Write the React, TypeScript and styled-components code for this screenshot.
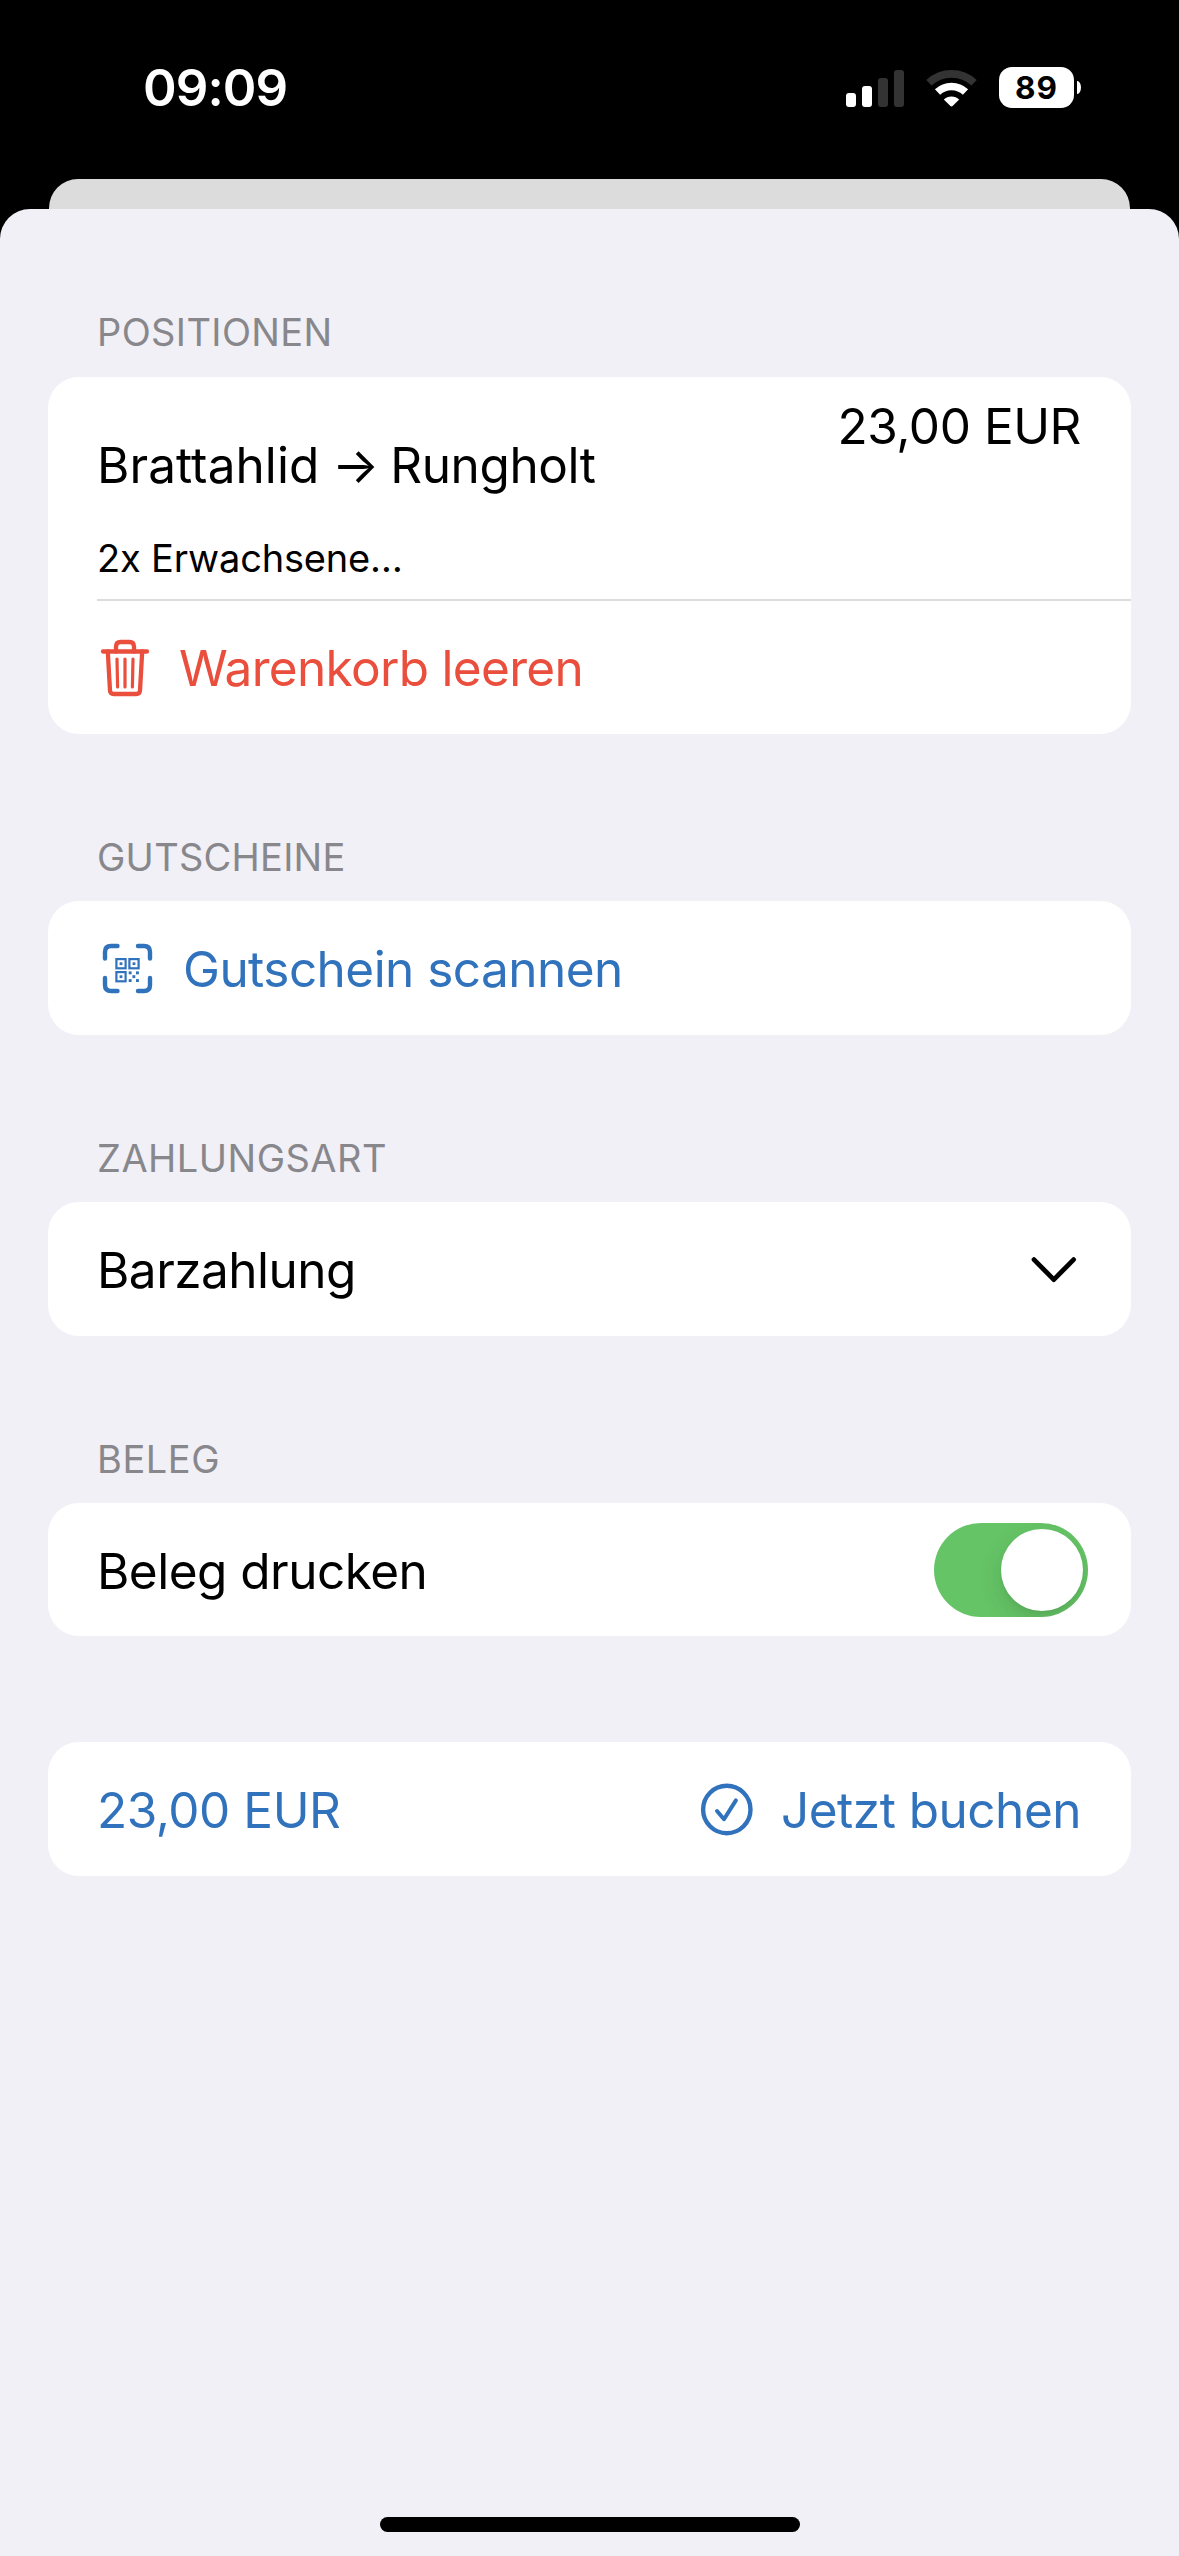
import React, { useState } from "react";
import styled, { createGlobalStyle } from "styled-components";

const BLUE = "#3172bd";
const RED = "#ea4e3d";

const GlobalStyle = createGlobalStyle`
  *, *::before, *::after { box-sizing: border-box; }
  body { margin: 0; background: #000; }
  button { font: inherit; color: inherit; border: 0; background: none; padding: 0; text-align: left; }
`;

const Screen = styled.div`
  display: flex;
  flex-direction: column;
  width: 1179px;
  height: 2556px;
  overflow: hidden;
  background: #000;
  color: #000;
  font-family: Inter, "Liberation Sans", sans-serif;
  font-size: 49.5px;
  line-height: 60px;
`;

const StatusBar = styled.header`
  display: flex;
  justify-content: space-between;
  align-items: flex-start;
  height: 179px;
  padding: 58px 98px 0 143px;
  color: #fff;
`;

const Clock = styled.time`
  font-size: 51px;
  font-weight: 570;
  letter-spacing: -0.9px;
`;

const StatusIcons = styled.div`
  display: flex;
  align-items: center;
  height: 60px;
`;

const SignalBars = styled.div`
  display: flex;
  align-items: flex-end;
  gap: 6px;
  height: 37px;
  margin-right: 22px;
`;

const SignalBar = styled.span<{ $height: number; $active?: boolean }>`
  width: 10px;
  height: ${(p) => p.$height}px;
  border-radius: 3px;
  background: ${(p) => (p.$active ? "#fff" : "#333")};
`;

const WifiIcon = styled.svg`
  width: 51px;
  height: 37px;
  margin-right: 22px;
`;

const Battery = styled.div`
  display: flex;
  align-items: center;
  gap: 3px;
  margin-bottom: 1px;
`;

const BatteryBody = styled.span`
  width: 75px;
  height: 41px;
  border-radius: 13px;
  background: #fff;
  color: #000;
  font-size: 31.5px;
  font-weight: 700;
  line-height: 41px;
  letter-spacing: 1px;
  text-align: center;
`;

const BatteryNub = styled.span`
  width: 4px;
  height: 13px;
  border-radius: 0 4px 4px 0 / 0 7px 7px 0;
  background: #fff;
`;

const BackCard = styled.div`
  flex: none;
  height: 30px;
  margin: 0 49px;
  border-radius: 29px 29px 0 0;
  background: #dcdcdc;
`;

const Sheet = styled.main`
  display: flex;
  flex: 1;
  flex-direction: column;
  padding: 0 48px 24px;
  border-radius: 30px 30px 0 0;
  background: #f1f0f6;
`;

const SectionTitle = styled.h2<{ $spacing: number; $first?: boolean }>`
  display: flex;
  align-items: flex-end;
  height: ${(p) => (p.$first ? 168 : 167)}px;
  margin: 0;
  padding: 0 49px ${(p) => (p.$first ? 22 : 21)}px;
  color: #88878c;
  font-size: 38px;
  font-weight: 400;
  line-height: 46px;
  letter-spacing: ${(p) => p.$spacing}px;
`;

const Card = styled.div<{ $height: number; $gap?: number }>`
  display: flex;
  flex-direction: column;
  height: ${(p) => p.$height}px;
  margin-top: ${(p) => p.$gap ?? 0}px;
  border-radius: 31px;
  background: #fff;
`;

const Row = styled.div<{ $color?: string }>`
  display: flex;
  flex: 1;
  justify-content: space-between;
  align-items: center;
  padding: 0 50px 0 49px;
  color: ${(p) => p.$color ?? "#000"};
`;

const PositionRow = styled.div`
  display: flex;
  justify-content: space-between;
  height: 222px;
  padding: 19px 50px 0 49px;
`;

const PositionText = styled.div`
  display: flex;
  flex-direction: column;
  gap: 40px;
  padding-top: 39px;
`;

const Route = styled.div`
  white-space: pre;
`;

const Detail = styled.div`
  font-size: 38px;
  line-height: 46px;
  letter-spacing: -0.19px;
`;

const Separator = styled.hr`
  flex: none;
  width: calc(100% - 49px);
  height: 2px;
  margin: 0 0 0 49px;
  border: 0;
  background: #dcdcde;
`;

const Label = styled.span<{ $spacing?: number }>`
  letter-spacing: ${(p) => p.$spacing ?? -0.5}px;
`;

const RowLabel = styled(Label)<{ $drop?: number }>`
  padding-top: ${(p) => p.$drop ?? 2}px;
`;

const Action = styled.button<{ $gap: number }>`
  display: flex;
  align-items: center;
  gap: ${(p) => p.$gap}px;
`;

const Icon = styled.svg<{ $width: number }>`
  flex: none;
  width: ${(p) => p.$width}px;
  height: 60px;
  fill: none;
  stroke: currentColor;
  stroke-linecap: round;
  stroke-linejoin: round;
`;

const Track = styled.button<{ $on: boolean }>`
  display: flex;
  justify-content: ${(p) => (p.$on ? "flex-end" : "flex-start")};
  align-items: center;
  width: 154px;
  height: 94px;
  margin: 1px -7px 0 0;
  padding: 0 5.5px;
  overflow: hidden;
  border-radius: 47px;
  background: ${(p) => (p.$on ? "#65c466" : "#e9e9ea")};
`;

const Knob = styled.span`
  width: 82px;
  height: 82px;
  border-radius: 50%;
  background: #fff;
  box-shadow: 0 9px 24px rgba(0, 0, 0, 0.13), 0 3px 3px rgba(0, 0, 0, 0.03);
`;

const HomeIndicator = styled.div`
  width: 420px;
  height: 15px;
  margin: auto auto 0;
  border-radius: 8px;
  background: #000;
`;

function Wifi() {
  return (
    <WifiIcon viewBox="0 0 51 37" fill="none">
      <path d="M2.9 13.4 A33 33 0 0 1 48.1 13.4" stroke="#333" strokeWidth="7.6" transform="translate(0 -.6)" />
      <path d="M11.5 22.4 A20.4 20.4 0 0 1 39.5 22.4" stroke="#fff" strokeWidth="7.6" transform="translate(0 -.4)" />
      <path d="M17.8 30 A11 11 0 0 1 33.2 30 L26.6 36.5 Q25.5 37.4 24.4 36.5Z" fill="#fff" transform="translate(0 -.4)" />
    </WifiIcon>
  );
}

function TrashIcon() {
  return (
    <Icon $width={56} viewBox="0 0 56 60" strokeWidth="4.3">
      <path d="M6 13.5H50" />
      <path d="M19 13.5V8.5Q19 4 23.5 4H32.5Q37 4 37 8.5V13.5" />
      <path d="M10.8 13.5L13 52.5Q13.2 56 16.8 56H39.2Q42.8 56 43 52.5L45.2 13.5" />
      <path d="M20 21L20.6 49M28 21V49M36 21L35.4 49" strokeWidth="3.2" />
    </Icon>
  );
}

function QrScanIcon() {
  return (
    <Icon $width={59} viewBox="0 0 59 60">
      <path
        d="M8 20.5V14Q8 8 14 8H20.5M41 8H47Q53 8 53 14V20.5M53 40V47Q53 53 47 53H41M20.5 53H14Q8 53 8 47V40"
        strokeWidth="4.4"
      />
      <g strokeWidth="2.2" strokeLinejoin="miter">
        <rect x="19.4" y="21.1" width="9.2" height="9.2" />
        <rect x="32.4" y="21.1" width="9.2" height="9.2" />
        <rect x="19.4" y="34.1" width="9.2" height="9.2" />
      </g>
      <g fill="currentColor" stroke="none">
        <rect x="22.6" y="24.3" width="2.8" height="2.8" />
        <rect x="35.6" y="24.3" width="2.8" height="2.8" />
        <rect x="22.6" y="37.3" width="2.8" height="2.8" />
        <rect x="31.7" y="33.4" width="2.9" height="2.9" />
        <rect x="39" y="33.4" width="2.9" height="2.9" />
        <rect x="35.4" y="37.2" width="2.9" height="2.9" />
        <rect x="31.7" y="41.1" width="2.9" height="2.9" />
        <rect x="39" y="41.1" width="2.9" height="2.9" />
      </g>
    </Icon>
  );
}

function ChevronIcon() {
  return (
    <Icon $width={56} viewBox="0 0 56 60" strokeWidth="4.8">
      <path d="M9 20.6L28.8 40.6L48.6 20.6" />
    </Icon>
  );
}

function CheckCircleIcon() {
  return (
    <Icon $width={57} viewBox="0 0 57 60" strokeWidth="4.4">
      <circle cx="28.8" cy="30.5" r="23.7" />
      <path d="M19 32L26 40.2L37.9 21.4" strokeWidth="4" />
    </Icon>
  );
}

export default function App() {
  const [printReceipt, setPrintReceipt] = useState(true);

  return (
    <Screen lang="de">
      <GlobalStyle />
      <StatusBar>
        <Clock>09:09</Clock>
        <StatusIcons>
          <SignalBars>
            <SignalBar $height={14} $active />
            <SignalBar $height={21} $active />
            <SignalBar $height={29} />
            <SignalBar $height={37} />
          </SignalBars>
          <Wifi />
          <Battery>
            <BatteryBody>89</BatteryBody>
            <BatteryNub />
          </Battery>
        </StatusIcons>
      </StatusBar>
      <BackCard />
      <Sheet>
        <SectionTitle $first $spacing={0.38}>POSITIONEN</SectionTitle>
        <Card $height={357}>
          <PositionRow>
            <PositionText>
              <Route>
                <Label $spacing={0.08}>Brattahlid</Label>
                <Label $spacing={-1.4}>{" → "}</Label>
                <Label $spacing={-0.4}>Rungholt</Label>
              </Route>
              <Detail>2x Erwachsene…</Detail>
            </PositionText>
            <Label $spacing={-0.45}>23,00 EUR</Label>
          </PositionRow>
          <Separator />
          <Row $color={RED}>
            <Action $gap={26}>
              <TrashIcon />
              <RowLabel $drop={0} $spacing={-0.68}>Warenkorb leeren</RowLabel>
            </Action>
          </Row>
        </Card>

        <SectionTitle $spacing={0.25}>GUTSCHEINE</SectionTitle>
        <Card $height={134}>
          <Row $color={BLUE}>
            <Action $gap={27}>
              <QrScanIcon />
              <RowLabel $spacing={-0.54}>Gutschein scannen</RowLabel>
            </Action>
          </Row>
        </Card>

        <SectionTitle $spacing={0.48}>ZAHLUNGSART</SectionTitle>
        <Card $height={134}>
          <Row>
            <RowLabel $spacing={-0.52}>Barzahlung</RowLabel>
            <ChevronIcon />
          </Row>
        </Card>

        <SectionTitle $spacing={0.55}>BELEG</SectionTitle>
        <Card $height={133}>
          <Row>
            <RowLabel $spacing={-0.52}>Beleg drucken</RowLabel>
            <Track
              $on={printReceipt}
              role="switch"
              aria-checked={printReceipt}
              onClick={() => setPrintReceipt(!printReceipt)}
            >
              <Knob />
            </Track>
          </Row>
        </Card>

        <Card $height={134} $gap={106}>
          <Row $color={BLUE}>
            <RowLabel $spacing={-0.45}>23,00 EUR</RowLabel>
            <Action $gap={26}>
              <CheckCircleIcon />
              <RowLabel $spacing={-0.5}>Jetzt buchen</RowLabel>
            </Action>
          </Row>
        </Card>
        <HomeIndicator />
      </Sheet>
    </Screen>
  );
}
